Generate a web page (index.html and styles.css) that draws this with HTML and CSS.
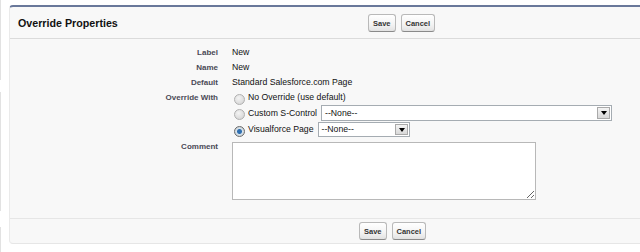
FILE: index.html
```html
<!DOCTYPE html>
<html lang="en">
<head>
    <meta charset="UTF-8">
    <title>Override Properties</title>
    <link rel="stylesheet" href="styles.css">
</head>
<body>
    <div class="page">
        <div class="side-edge">
            <span class="edge-seg seg-a"></span>
            <span class="edge-seg seg-b"></span>
            <span class="edge-seg seg-c"></span>
        </div>
        <div class="panel">
            <div class="panel-head">
                <h2 class="panel-title">Override Properties</h2>
                <div class="btn-row head-btns">
                    <button class="btn">Save</button>
                    <button class="btn">Cancel</button>
                </div>
            </div>

            <div class="panel-body">
                <div class="row">
                    <div class="lbl">Label</div>
                    <div class="val">New</div>
                </div>
                <div class="row">
                    <div class="lbl">Name</div>
                    <div class="val">New</div>
                </div>
                <div class="row">
                    <div class="lbl">Default</div>
                    <div class="val">Standard Salesforce.com Page</div>
                </div>
                <div class="row">
                    <div class="lbl">Override With</div>
                    <div class="val options">
                        <div class="opt">
                            <span class="radio"></span>
                            <span>No Override (use default)</span>
                        </div>
                        <div class="opt">
                            <span class="radio"></span>
                            <span>Custom S-Control</span>
                            <div class="picklist wide">
                                <span class="pick-text">--None--</span>
                                <span class="pick-arrow"></span>
                            </div>
                        </div>
                        <div class="opt">
                            <span class="radio on"></span>
                            <span>Visualforce Page</span>
                            <div class="picklist narrow">
                                <span class="pick-text">--None--</span>
                                <span class="pick-arrow"></span>
                            </div>
                        </div>
                    </div>
                </div>
                <div class="row comment-row">
                    <div class="lbl">Comment</div>
                    <div class="val">
                        <textarea class="comment"></textarea>
                    </div>
                </div>
            </div>

            <div class="panel-foot">
                <div class="btn-row foot-btns">
                    <button class="btn">Save</button>
                    <button class="btn">Cancel</button>
                </div>
            </div>
        </div>
    </div>
</body>
</html>
```

FILE: styles.css
```css
body {
    margin: 0;
    background: #fff;
    font-family: "Liberation Sans", Arial, sans-serif;
    font-size: 12px;
    color: #000;
    overflow: hidden;
}

.page {
    display: flex;
    width: 640px;
    height: 252px;
}

/* faint edge of the sidebar on the far left */
.side-edge {
    width: 9px;
    flex: none;
    display: flex;
    flex-direction: column;
}

.edge-seg {
    display: block;
    width: 1px;
    background: #e2e2e2;
}

.seg-a {
    height: 84px;
}

.seg-b {
    height: 126px;
    margin-top: 12px;
}

.seg-c {
    height: 26px;
    margin-top: 16px;
}

/* the panel runs on past the right edge, so it has no right border */
.panel {
    flex: 1;
    min-width: 0;
    margin-top: 5px;
    height: 239px;
    background: #f8f8f8;
    border-top: 2px solid #69789a;
    border-left: 1px solid #eaeaea;
    border-bottom: 1px solid #e6e6e6;
    border-radius: 4px 0 0 4px;
    display: flex;
    flex-direction: column;
    box-sizing: border-box;
}

.panel-head {
    display: flex;
    align-items: center;
    height: 31px;
    flex: none;
    border-bottom: 1px solid #dbdbdb;
}

.panel-title {
    margin: 0;
    width: 350px;
    padding-left: 8px;
    font-size: 10.7px;
    font-weight: bold;
    color: #111;
    box-sizing: border-box;
}

.btn-row {
    display: flex;
    gap: 5px;
}

.head-btns {
    margin-left: 8px;
    margin-top: 1px;
}

.btn {
    font-family: "Liberation Sans", Arial, sans-serif;
    font-size: 7.5px;
    font-weight: bold;
    color: #333;
    height: 18px;
    padding: 0 4px;
    background: linear-gradient(#ffffff, #f3f3f3 60%, #e2e2e2);
    border: 1px solid #b9b9b9;
    border-bottom-color: #8a8a8a;
    border-radius: 3px;
}

.panel-body {
    height: 180px;
    flex: none;
    padding-top: 6px;
    box-sizing: border-box;
    border-bottom: 1px solid #e6e6e6;
}

.row {
    display: flex;
    min-height: 15px;
    line-height: 15px;
}

.lbl {
    width: 208px;
    flex: none;
    text-align: right;
    font-size: 8px;
    font-weight: bold;
    color: #4a4a56;
    padding-right: 14px;
}

.val {
    font-size: 8.7px;
    color: #111;
}

.options {
    display: flex;
    flex-direction: column;
    margin-left: 1px;
}

.opt {
    display: flex;
    align-items: center;
    gap: 3px;
    height: 15px;
}

.opt:nth-child(2) {
    height: 16px;
}

.opt:nth-child(3) {
    height: 17px;
}

.radio {
    display: inline-block;
    width: 9px;
    height: 9px;
    margin: 3px 0 0 1px;
    border-radius: 50%;
    border: 1px solid #b0b0b0;
    background: radial-gradient(circle at 40% 35%, #f4f4f4, #cfcfcf);
}

.radio.on {
    border-color: #6a6a6a;
    background: radial-gradient(circle at 50% 50%, #2f6fb0 0, #2f6fb0 2px, #d9e3ea 3px, #bcc4ca);
}

.picklist {
    display: flex;
    align-items: center;
    height: 14px;
    margin-left: 1px;
    background: #fff;
    border: 1px solid #a5acb2;
}

.picklist.wide {
    width: 289px;
}

.picklist.narrow {
    width: 90px;
    height: 13px;
}

.pick-text {
    flex: 1;
    padding-left: 3px;
    font-size: 8.7px;
}

.pick-arrow {
    position: relative;
    width: 13px;
    height: 12px;
    margin-right: 1px;
    background: linear-gradient(#f4f4f4, #d8d8d8);
    border: 1px solid #a9a9a9;
    box-sizing: border-box;
}

.narrow .pick-arrow {
    height: 11px;
}

.pick-arrow::after {
    content: "";
    position: absolute;
    left: 3px;
    top: 3px;
    border-left: 3px solid transparent;
    border-right: 3px solid transparent;
    border-top: 4px solid #000;
}

.comment-row {
    margin-top: 4px;
}

.comment-row .lbl {
    line-height: 10px;
}

.comment {
    display: block;
    width: 304px;
    height: 58px;
    margin: 0;
    border: 1px solid #b8b8b8;
    background: #fff;
    box-sizing: border-box;
}

.panel-foot {
    flex: 1;
    display: flex;
    align-items: center;
}

.foot-btns {
    margin-left: 349px;
}
```
